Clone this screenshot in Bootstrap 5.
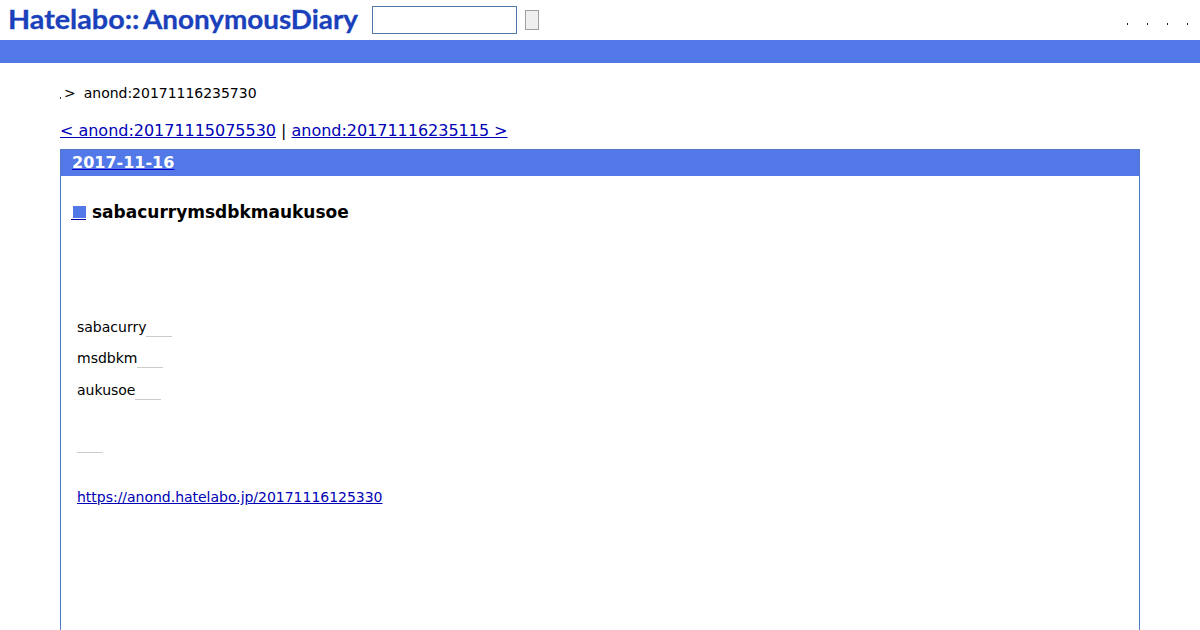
<!DOCTYPE html>
<html lang="ja">
<head>
    <meta charset="UTF-8">
    <meta name="viewport" content="width=device-width, initial-scale=1.0">
    <title>sabacurrymsdbkmaukusoe</title>

    <!-- Bootstrap CSS -->
    <link href="https://cdn.jsdelivr.net/npm/bootstrap@5.3.2/dist/css/bootstrap.min.css" rel="stylesheet">

    <style>
        body {
            font-family: "DejaVu Sans", sans-serif;
            font-size: 14px;
            line-height: 20px;
            color: #000;
            height: 630px;
            overflow: hidden;
        }

        a {
            color: #0000b4;
        }

        .site-header {
            height: 40px;
        }

        .logo {
            width: 364px;
            height: 40px;
            fill: #1a41bb;
            stroke: #1a41bb;
            stroke-width: 0.3px;
            font-family: Lato, sans-serif;
            font-weight: 700;
            font-size: 26px;
        }

        .search-box {
            width: 145px;
            height: 28px;
            margin-left: 8px;
            border: 1px solid #5276a8;
        }

        .search-button {
            width: 14px;
            height: 20px;
            margin-left: 8px;
            border: 1px solid #a0a0a0;
            background-color: #efefef;
        }

        .dots {
            gap: 19px;
            margin-right: 12px;
            padding-top: 8px;
        }

        .dot {
            width: 1px;
            height: 2px;
            background-color: #222;
        }

        .blue-bar {
            height: 23px;
            background-color: #5279e7;
        }

        .page-body {
            margin: 0 60px;
        }

        .crumbs {
            padding-top: 20px;
            height: 57px;
        }

        .crumb-dot {
            width: 1px;
            height: 2px;
            margin: 14px 3px 0 0;
            background-color: #444;
        }

        .crumb-name {
            margin-left: 8px;
            letter-spacing: -0.02px;
        }

        .pager {
            height: 29px;
            font-size: 16px;
            line-height: 21px;
            letter-spacing: -0.02px;
        }

        .day {
            height: 500px;
            border: 1px solid #5279c7;
        }

        .day-title {
            height: 26px;
            padding-left: 11px;
            background-color: #5279e7;
            font-size: 16px;
            line-height: 26px;
            font-weight: bold;
        }

        .day-title a {
            color: #fff;
            text-decoration-color: #0000c8;
        }

        .entry-title {
            margin: 26px 0 0 10px;
            height: 20px;
            font-size: 17px;
            line-height: 20px;
            font-weight: bold;
        }

        .marker {
            width: 15px;
            height: 14px;
            margin: 4px 6px 0 0;
            padding-left: 2px;
            border-bottom: 1px solid #0000a0;
        }

        .marker span {
            width: 13px;
            height: 12px;
            background-color: #5279e7;
        }

        .entry-body {
            padding: 95px 0 0 16px;
        }

        .entry-line {
            height: 20px;
            margin-bottom: 11px;
        }

        .entry-line.loose {
            margin-bottom: 12px;
        }

        .entry-line.blank {
            margin-bottom: 2px;
        }

        .keyword-line {
            width: 26px;
            height: 20px;
            border-bottom: 1px solid #ccc;
        }

        .entry-link {
            padding-top: 23px;
            letter-spacing: -0.02px;
        }
    </style>
</head>
<body>
    <header class="site-header d-flex align-items-center">
        <svg class="logo" viewBox="0 0 364 40">
            <text x="8" y="29" textLength="131.5" lengthAdjust="spacingAndGlyphs">Hatelabo::</text>
            <text x="143" y="29" textLength="215" lengthAdjust="spacingAndGlyphs">AnonymousDiary</text>
        </svg>
        <input type="text" class="search-box" aria-label="Search">
        <button type="button" class="search-button p-0" aria-label="Submit"></button>
        <div class="dots d-flex ms-auto">
            <span class="dot"></span>
            <span class="dot"></span>
            <span class="dot"></span>
            <span class="dot"></span>
        </div>
    </header>
    <div class="blue-bar"></div>

    <main class="page-body">
        <div class="crumbs d-flex align-items-start">
            <span class="crumb-dot"></span>
            <span>&gt;</span>
            <span class="crumb-name">anond:20171116235730</span>
        </div>
        <div class="pager">
            <a href="#">&lt; anond:20171115075530</a> | <a href="#">anond:20171116235115 &gt;</a>
        </div>

        <div class="day">
            <div class="day-title"><a href="#">2017-11-16</a></div>
            <div class="entry-title d-flex">
                <a href="#" class="marker d-flex" aria-label="Permalink"><span></span></a>
                <span>sabacurrymsdbkmaukusoe</span>
            </div>
            <div class="entry-body">
                <div class="entry-line d-flex"><span>sabacurry</span><span class="keyword-line"></span></div>
                <div class="entry-line loose d-flex"><span>msdbkm</span><span class="keyword-line"></span></div>
                <div class="entry-line d-flex"><span>aukusoe</span><span class="keyword-line"></span></div>
                <div class="entry-line blank"></div>
                <div class="entry-line d-flex"><span class="keyword-line"></span></div>
                <div class="entry-link"><a href="#">https://anond.hatelabo.jp/20171116125330</a></div>
            </div>
        </div>
    </main>

    <!-- Bootstrap JavaScript and Popper.js -->
    <script src="https://cdn.jsdelivr.net/npm/bootstrap@5.3.2/dist/js/bootstrap.bundle.min.js"></script>
</body>
</html>
